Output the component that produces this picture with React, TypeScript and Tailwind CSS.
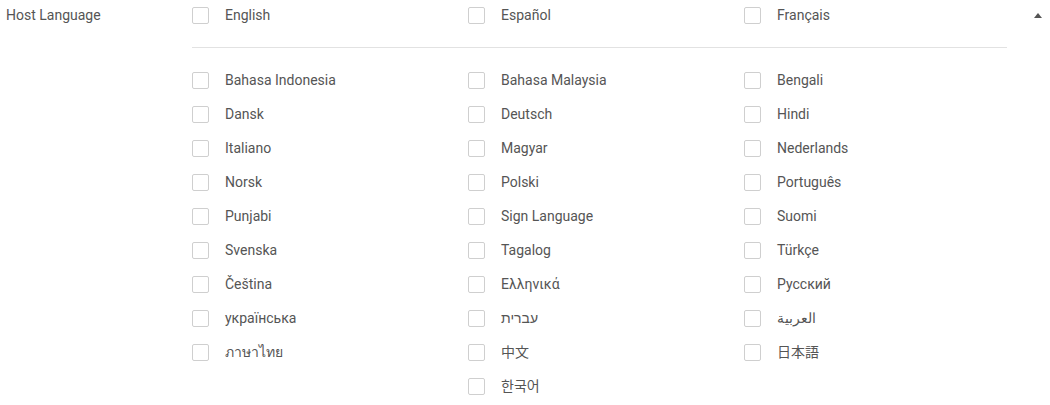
import React from 'react';

const top = ['English', 'Español', 'Français'];

const rest = [
    'Bahasa Indonesia', 'Bahasa Malaysia', 'Bengali',
    'Dansk', 'Deutsch', 'Hindi',
    'Italiano', 'Magyar', 'Nederlands',
    'Norsk', 'Polski', 'Português',
    'Punjabi', 'Sign Language', 'Suomi',
    'Svenska', 'Tagalog', 'Türkçe',
    'Čeština', 'Ελληνικά', 'Русский',
    'українська', 'עברית', 'العربية',
    'ภาษาไทย', '中文', '日本語',
    '', '한국어', '',
];

const Option: React.FC<{ label: string }> = ({ label }) => {
    if (!label) return <div />;
    return (
        <label className="flex items-center h-full cursor-pointer">
            <span className="w-[17px] h-[17px] border border-[#cfcfcf] rounded-[2px] bg-white shrink-0" />
            <span className="ml-[16px] text-[14px] text-[#555]">{label}</span>
        </label>
    );
};

const App: React.FC = () => {
    return (
        <div
            className="flex bg-white w-[1050px] h-[405px] overflow-hidden"
            style={{ fontFamily: 'Roboto, "Noto Sans", "Noto Sans CJK JP", sans-serif' }}
        >
            <div className="w-[192px] shrink-0 pl-[6px] h-[31px] flex items-center text-[14px] text-[#555]">
                Host Language
            </div>
            <div className="w-[815px] shrink-0">
                <div className="grid grid-cols-[276px_276px_263px] h-[31px]">
                    {top.map(l => <Option key={l} label={l} />)}
                </div>
                <div className="mt-[16px] h-px bg-[#e2e2e2]" />
                <div className="mt-[15px] grid grid-cols-[276px_276px_263px] auto-rows-[34px]">
                    {rest.map((l, i) => <Option key={i} label={l} />)}
                </div>
            </div>
            <div className="flex-1 h-[31px] flex items-center justify-end pr-[8px]">
                <svg width="8" height="5" viewBox="0 0 8 5">
                    <path d="M0 5 L4 0 L8 5 Z" fill="#555" />
                </svg>
            </div>
        </div>
    );
};

export default App;
